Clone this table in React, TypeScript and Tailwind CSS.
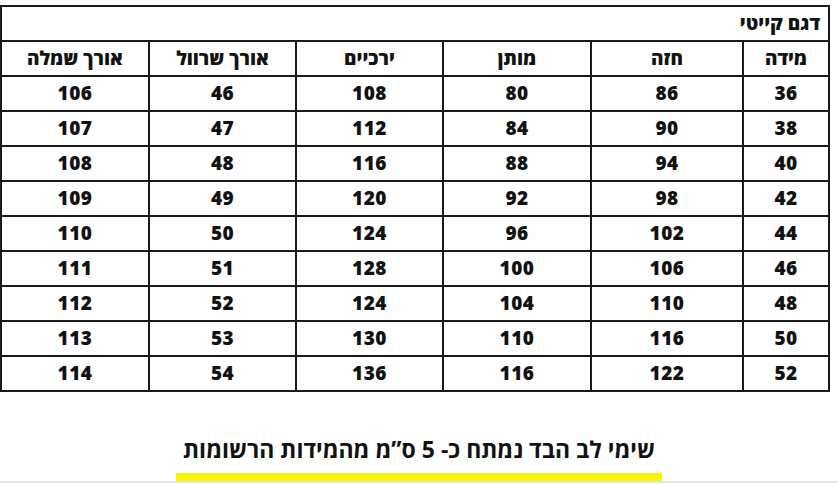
const headers = ['מידה', 'חזה', 'מותן', 'ירכיים', 'אורך שרוול', 'אורך שמלה'];
const widths = ['w-[86px]', 'w-[152px]', 'w-[148px]', 'w-[147px]', 'w-[147px]', 'w-[148px]'];

const rows = [
  [36, 86, 80, 108, 46, 106],
  [38, 90, 84, 112, 47, 107],
  [40, 94, 88, 116, 48, 108],
  [42, 98, 92, 120, 49, 109],
  [44, 102, 96, 124, 50, 110],
  [46, 106, 100, 128, 51, 111],
  [48, 110, 104, 124, 52, 112],
  [50, 116, 110, 130, 53, 113],
  [52, 122, 116, 136, 54, 114],
];

export default function App() {
  return (
    <div
      dir="rtl"
      className="relative h-[484px] w-[838px] overflow-hidden bg-white text-[#121212]"
      style={{ fontFamily: '"Open Sans", "DejaVu Sans", "Liberation Sans", sans-serif' }}
    >
      <div className="flex justify-end pt-[5px] pr-[5px]">
        <table className="w-[828px] table-fixed border-collapse border-2 border-[#1a1a1a]">
          <colgroup>
            {widths.map((w, i) => (
              <col key={i} className={w} />
            ))}
          </colgroup>
          <thead>
            <tr className="h-[35px]">
              <th colSpan={6} className="border-2 border-[#1a1a1a] pr-[8px] text-right text-[19px] font-extrabold">
                דגם קייטי
              </th>
            </tr>
            <tr className="h-[35px]">
              {headers.map((h) => (
                <th key={h} className="border-2 border-[#1a1a1a] text-center text-[19px] font-extrabold">
                  {h}
                </th>
              ))}
            </tr>
          </thead>
          <tbody>
            {rows.map((row) => (
              <tr key={row[0]} className="h-[35px]">
                {row.map((v, i) => (
                  <td key={i} className="border-2 border-[#1a1a1a] text-center text-[19px] font-extrabold tracking-[0.5px]">
                    {v}
                  </td>
                ))}
              </tr>
            ))}
          </tbody>
        </table>
      </div>
      <div className="mt-[42px] text-center text-[23px] font-bold leading-[30px]">
        שימי לב הבד נמתח כ- 5 ס”מ מהמידות הרשומות
      </div>
      <div className="mt-[9px] flex justify-center">
        <div className="h-[8px] w-[486px] bg-[#fff200]" />
      </div>
      <div className="h-[2px] w-full bg-[#e4e4e4]" />
    </div>
  );
}
